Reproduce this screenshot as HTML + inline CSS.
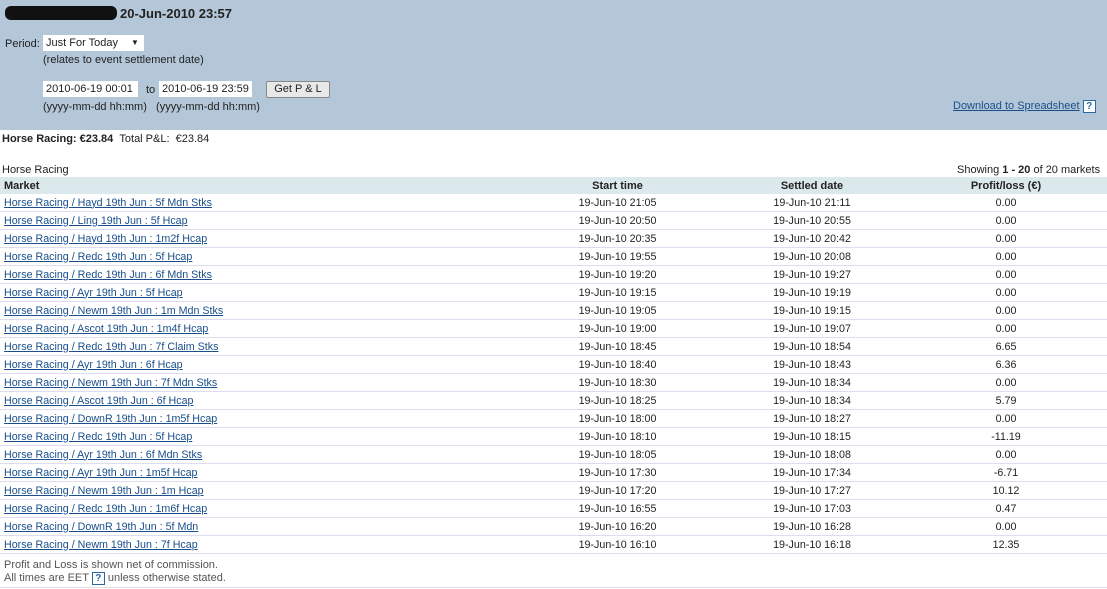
<!DOCTYPE html>
<html><head><meta charset="utf-8"><style>
body{margin:0;width:1107px;height:589px;background:#fff;font-family:"Liberation Sans",sans-serif;font-size:11px;color:#222;position:relative;overflow:hidden}
.hdr{position:absolute;left:0;top:0;width:1107px;height:130px;background:#b3c7d8}
.a{position:absolute;white-space:nowrap}
.inp{position:absolute;background:#fff;height:16px;line-height:16px;padding-left:3px;font-size:11px}
.btn{position:absolute;background:#e8e8e8;border:1px solid #888;border-radius:2px;height:15px;line-height:15px;text-align:center;font-size:11px}
a{color:#1a4f8a;text-decoration:underline}
.q{display:inline-block;border:1px solid #2a6aa0;color:#2a6aa0;font-weight:bold;width:11px;height:11px;line-height:11px;text-align:center;font-size:10px;background:#fff}
table{position:absolute;left:0;top:177px;width:1107px;border-collapse:collapse;font-size:10.7px}
th{background:#dbe8ec;height:17px;font-size:11px;text-align:center;padding:0}
th:first-child{text-align:left;padding-left:4px}
td{height:17px;border-bottom:1px solid #dde;padding:0;text-align:center}
td:first-child{text-align:left;padding-left:4px}
th:last-child,td:last-child{padding-right:24px}
</style></head><body>
<div class="hdr"></div>
<div class="a" style="left:5px;top:6px;width:112px;height:14px;background:#111;border-radius:6px"></div>
<div class="a" style="left:120px;top:6px;font-weight:bold;font-size:13px">20-Jun-2010 23:57</div>
<div class="a" style="left:5px;top:38px">Period:</div>
<div class="inp" style="left:43px;top:35px;width:98px">Just For Today <span style="position:absolute;left:88px;font-size:8px">▼</span></div>
<div class="a" style="left:43px;top:54px">(relates to event settlement date)</div>
<div class="inp" style="left:43px;top:81px;width:92px">2010-06-19 00:01</div>
<div class="a" style="left:146px;top:84px">to</div>
<div class="inp" style="left:159px;top:81px;width:90px">2010-06-19 23:59</div>
<div class="btn" style="left:266px;top:81px;width:62px">Get P &amp; L</div>
<div class="a" style="left:43px;top:101px">(yyyy-mm-dd hh:mm) &nbsp;&nbsp;(yyyy-mm-dd hh:mm)</div>
<div class="a" style="left:953px;top:100px"><a>Download to Spreadsheet</a> <span class="q">?</span></div>
<div class="a" style="left:2px;top:133px"><b>Horse Racing: €23.84</b> &nbsp;Total P&amp;L: &nbsp;€23.84</div>
<div class="a" style="left:2px;top:164px">Horse Racing</div>
<div class="a" style="left:957px;top:164px">Showing <b>1 - 20</b> of 20 markets</div>
<table>
<tr><th style="width:536px">Market</th><th style="width:155px">Start time</th><th style="width:234px">Settled date</th><th>Profit/loss (€)</th></tr>
<tr><td><a>Horse Racing / Hayd 19th Jun : 5f Mdn Stks</a></td><td>19-Jun-10 21:05</td><td>19-Jun-10 21:11</td><td>0.00</td></tr>
<tr><td><a>Horse Racing / Ling 19th Jun : 5f Hcap</a></td><td>19-Jun-10 20:50</td><td>19-Jun-10 20:55</td><td>0.00</td></tr>
<tr><td><a>Horse Racing / Hayd 19th Jun : 1m2f Hcap</a></td><td>19-Jun-10 20:35</td><td>19-Jun-10 20:42</td><td>0.00</td></tr>
<tr><td><a>Horse Racing / Redc 19th Jun : 5f Hcap</a></td><td>19-Jun-10 19:55</td><td>19-Jun-10 20:08</td><td>0.00</td></tr>
<tr><td><a>Horse Racing / Redc 19th Jun : 6f Mdn Stks</a></td><td>19-Jun-10 19:20</td><td>19-Jun-10 19:27</td><td>0.00</td></tr>
<tr><td><a>Horse Racing / Ayr 19th Jun : 5f Hcap</a></td><td>19-Jun-10 19:15</td><td>19-Jun-10 19:19</td><td>0.00</td></tr>
<tr><td><a>Horse Racing / Newm 19th Jun : 1m Mdn Stks</a></td><td>19-Jun-10 19:05</td><td>19-Jun-10 19:15</td><td>0.00</td></tr>
<tr><td><a>Horse Racing / Ascot 19th Jun : 1m4f Hcap</a></td><td>19-Jun-10 19:00</td><td>19-Jun-10 19:07</td><td>0.00</td></tr>
<tr><td><a>Horse Racing / Redc 19th Jun : 7f Claim Stks</a></td><td>19-Jun-10 18:45</td><td>19-Jun-10 18:54</td><td>6.65</td></tr>
<tr><td><a>Horse Racing / Ayr 19th Jun : 6f Hcap</a></td><td>19-Jun-10 18:40</td><td>19-Jun-10 18:43</td><td>6.36</td></tr>
<tr><td><a>Horse Racing / Newm 19th Jun : 7f Mdn Stks</a></td><td>19-Jun-10 18:30</td><td>19-Jun-10 18:34</td><td>0.00</td></tr>
<tr><td><a>Horse Racing / Ascot 19th Jun : 6f Hcap</a></td><td>19-Jun-10 18:25</td><td>19-Jun-10 18:34</td><td>5.79</td></tr>
<tr><td><a>Horse Racing / DownR 19th Jun : 1m5f Hcap</a></td><td>19-Jun-10 18:00</td><td>19-Jun-10 18:27</td><td>0.00</td></tr>
<tr><td><a>Horse Racing / Redc 19th Jun : 5f Hcap</a></td><td>19-Jun-10 18:10</td><td>19-Jun-10 18:15</td><td>-11.19</td></tr>
<tr><td><a>Horse Racing / Ayr 19th Jun : 6f Mdn Stks</a></td><td>19-Jun-10 18:05</td><td>19-Jun-10 18:08</td><td>0.00</td></tr>
<tr><td><a>Horse Racing / Ayr 19th Jun : 1m5f Hcap</a></td><td>19-Jun-10 17:30</td><td>19-Jun-10 17:34</td><td>-6.71</td></tr>
<tr><td><a>Horse Racing / Newm 19th Jun : 1m Hcap</a></td><td>19-Jun-10 17:20</td><td>19-Jun-10 17:27</td><td>10.12</td></tr>
<tr><td><a>Horse Racing / Redc 19th Jun : 1m6f Hcap</a></td><td>19-Jun-10 16:55</td><td>19-Jun-10 17:03</td><td>0.47</td></tr>
<tr><td><a>Horse Racing / DownR 19th Jun : 5f Mdn</a></td><td>19-Jun-10 16:20</td><td>19-Jun-10 16:28</td><td>0.00</td></tr>
<tr><td><a>Horse Racing / Newm 19th Jun : 7f Hcap</a></td><td>19-Jun-10 16:10</td><td>19-Jun-10 16:18</td><td>12.35</td></tr>
</table>
<div class="a" style="left:4px;top:559px;color:#555">Profit and Loss is shown net of commission.</div>
<div class="a" style="left:4px;top:572px;color:#555">All times are EET <span class="q">?</span> unless otherwise stated.</div>
<div class="a" style="left:0;top:587px;width:1107px;height:1px;background:#dde"></div>
</body></html>
